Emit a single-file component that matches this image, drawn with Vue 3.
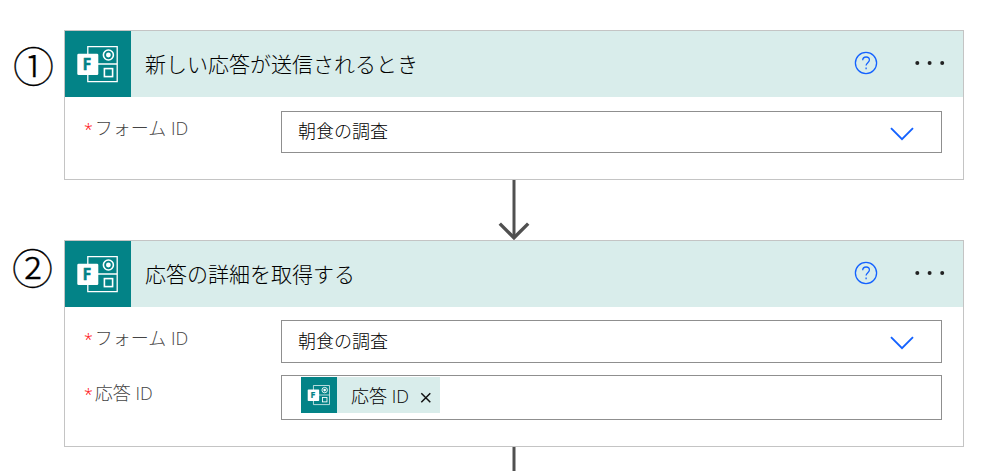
<template>
  <main class="flow">
    <template v-for="step in steps" :key="step.mark">
      <section class="step">
        <span class="mark">{{ step.mark }}</span>

        <div class="card">
          <header class="card-header">
            <FormsLogo class="forms-icon" />
            <h2>{{ step.title }}</h2>
            <svg class="help" viewBox="0 0 24 24">
              <circle cx="12" cy="12" r="10.6" />
              <path d="M8.7 9.3c0-2 1.4-3.3 3.4-3.3s3.3 1.2 3.3 3c0 2.6-3.3 2.8-3.3 5.6" />
              <path d="M12.1 16.6v1.6" />
            </svg>
            <svg class="more" viewBox="0 0 32 6">
              <circle cx="3.3" cy="3" r="2" />
              <circle cx="15.6" cy="3" r="2" />
              <circle cx="28.2" cy="3" r="2" />
            </svg>
          </header>

          <div class="fields" :class="{ tall: step.fields.length > 1 }">
            <div v-for="field in step.fields" :key="field.label" class="field">
              <label><i>*</i>{{ field.label }}</label>

              <div v-if="field.token" class="box token-box">
                <span class="token">
                  <FormsLogo class="token-icon" />
                  <span class="token-text">{{ field.token }}</span>
                  <svg class="close" viewBox="0 0 12 12">
                    <path d="M1.3 1.3l9 9M10.3 1.3l-9 9" />
                  </svg>
                </span>
              </div>

              <div v-else class="box select">
                <span>{{ field.value }}</span>
                <svg class="chevron" viewBox="0 0 24 14">
                  <path d="M1 1.2l11 11 11-11" />
                </svg>
              </div>
            </div>
          </div>
        </div>
      </section>

      <!-- Connector to the next step -->
      <svg class="connector" viewBox="0 0 32 60">
        <path d="M16 0v58" />
        <path class="head" d="M1.8 43.6L16 57.8l14.2-14.2" />
      </svg>
    </template>
  </main>
</template>

<script setup>
import { h } from "vue";

// Forms connector logo, used in the card header and in the token
const FormsLogo = () =>
  h("svg", { viewBox: "0 0 66 66" }, [
    h("rect", { width: 66, height: 66, fill: "#038387" }),
    h("g", { fill: "none", stroke: "#fff", "stroke-width": 1.3 }, [
      h("path", { d: "M22.8 15.6h29.4v35H22.8zM33 33h19" }),
      h("circle", { cx: 43.4, cy: 24, r: 5, "stroke-width": 1.6 }),
      h("rect", { x: 39.4, y: 37.6, width: 8.2, height: 8, "stroke-width": 1.6 }),
    ]),
    h("circle", { cx: 43.4, cy: 24, r: 2.4, fill: "#fff" }),
    h("rect", { x: 12.3, y: 22.7, width: 21, height: 21.3, rx: 1.3, fill: "#fff" }),
    h(
      "text",
      {
        x: 17.4,
        y: 39,
        fill: "#038387",
        stroke: "#038387",
        "stroke-width": 0.4,
        "font-family": "Open Sans, sans-serif",
        "font-size": 16,
        "font-weight": 700,
      },
      "F"
    ),
  ]);

const steps = [
  {
    mark: "①",
    title: "新しい応答が送信されるとき",
    fields: [{ label: "フォーム ID", value: "朝食の調査" }],
  },
  {
    mark: "②",
    title: "応答の詳細を取得する",
    fields: [
      { label: "フォーム ID", value: "朝食の調査" },
      { label: "応答 ID", token: "応答 ID" },
    ],
  },
];
</script>

<style>
body {
  margin: 0;
  background: #fff;
  overflow: hidden;
}
</style>

<style scoped>
.flow {
  width: 1005px;
  height: 471px;
  box-sizing: border-box;
  padding-top: 30px;
  overflow: hidden;
  font-family: "Open Sans", "Noto Sans CJK JP", sans-serif;
  font-weight: 300;
  color: #000;
}
.step {
  display: flex;
}
.mark {
  width: 64px;
  flex: none;
  box-sizing: border-box;
  padding: 13px 0 0 13px;
  font-family: "Noto Sans CJK JP", sans-serif;
  font-size: 41px;
  line-height: 42px;
  -webkit-text-stroke: 0.3px #000;
}
.step:not(:first-child) .mark {
  padding: 5px 0 0 12px;
}
.card {
  width: 900px;
  box-sizing: border-box;
  border: 1px solid #c4c4c4;
}
.card-header {
  display: flex;
  align-items: center;
  height: 66px;
  background: #d9edeb;
}
.forms-icon {
  width: 66px;
  height: 66px;
}
h2 {
  flex: 1;
  margin: 0 0 2px 14px;
  font-family: "Noto Sans CJK JP", sans-serif;
  font-size: 21px;
  font-weight: 300;
  line-height: 30px;
}
.help {
  width: 24px;
  height: 24px;
  margin: 0 36px 2px 0;
  fill: none;
  stroke: #1462ff;
  stroke-width: 1.3;
}
.more {
  width: 32px;
  height: 6px;
  margin: 0 17px 2px 0;
  fill: #222;
}
.fields {
  display: flex;
  flex-direction: column;
  gap: 12px;
  padding: 14px 21px 26px 19px;
}
.fields.tall {
  padding-top: 13px;
}
.field {
  display: flex;
}
label {
  width: 197px;
  flex: none;
  padding-top: 4px;
  font-size: 18px;
  line-height: 26px;
  color: #444;
}
.tall label {
  padding-top: 5px;
}
label i {
  margin-right: 2px;
  font-size: 16px;
  font-style: normal;
  color: #f00;
}
.box {
  flex: 1;
  display: flex;
  align-items: center;
  height: 42px;
  box-sizing: border-box;
  border: 1px solid #8f8f8f;
  font-size: 18px;
  line-height: 26px;
}
.tall .select {
  height: 43px;
}
.select {
  justify-content: space-between;
  padding: 0 27px 0 16px;
}
.select span {
  margin-bottom: 4px;
  font-family: "Noto Sans CJK JP", sans-serif;
}
.chevron {
  width: 24px;
  height: 14px;
  margin-top: 4px;
  fill: none;
  stroke: #1462ff;
  stroke-width: 1.9;
}
.tall .chevron {
  margin-top: 2px;
}
.tall .token-box {
  height: 45px;
  align-items: flex-start;
  padding: 1px 0 0 19px;
}
.token {
  display: flex;
  align-items: center;
  width: 139px;
  height: 36px;
  background: #d9edeb;
}
.token-icon {
  width: 36px;
  height: 36px;
}
.token-text {
  margin: 1px 0 0 14px;
}
.close {
  width: 12px;
  height: 12px;
  margin: 6px 0 0 11px;
  fill: none;
  stroke: #111;
  stroke-width: 1.5;
}
.connector {
  display: block;
  width: 32px;
  height: 60px;
  margin-left: 498px;
  fill: none;
  stroke: #505050;
  stroke-width: 3;
}
.connector .head {
  stroke-width: 3.4;
}
</style>
